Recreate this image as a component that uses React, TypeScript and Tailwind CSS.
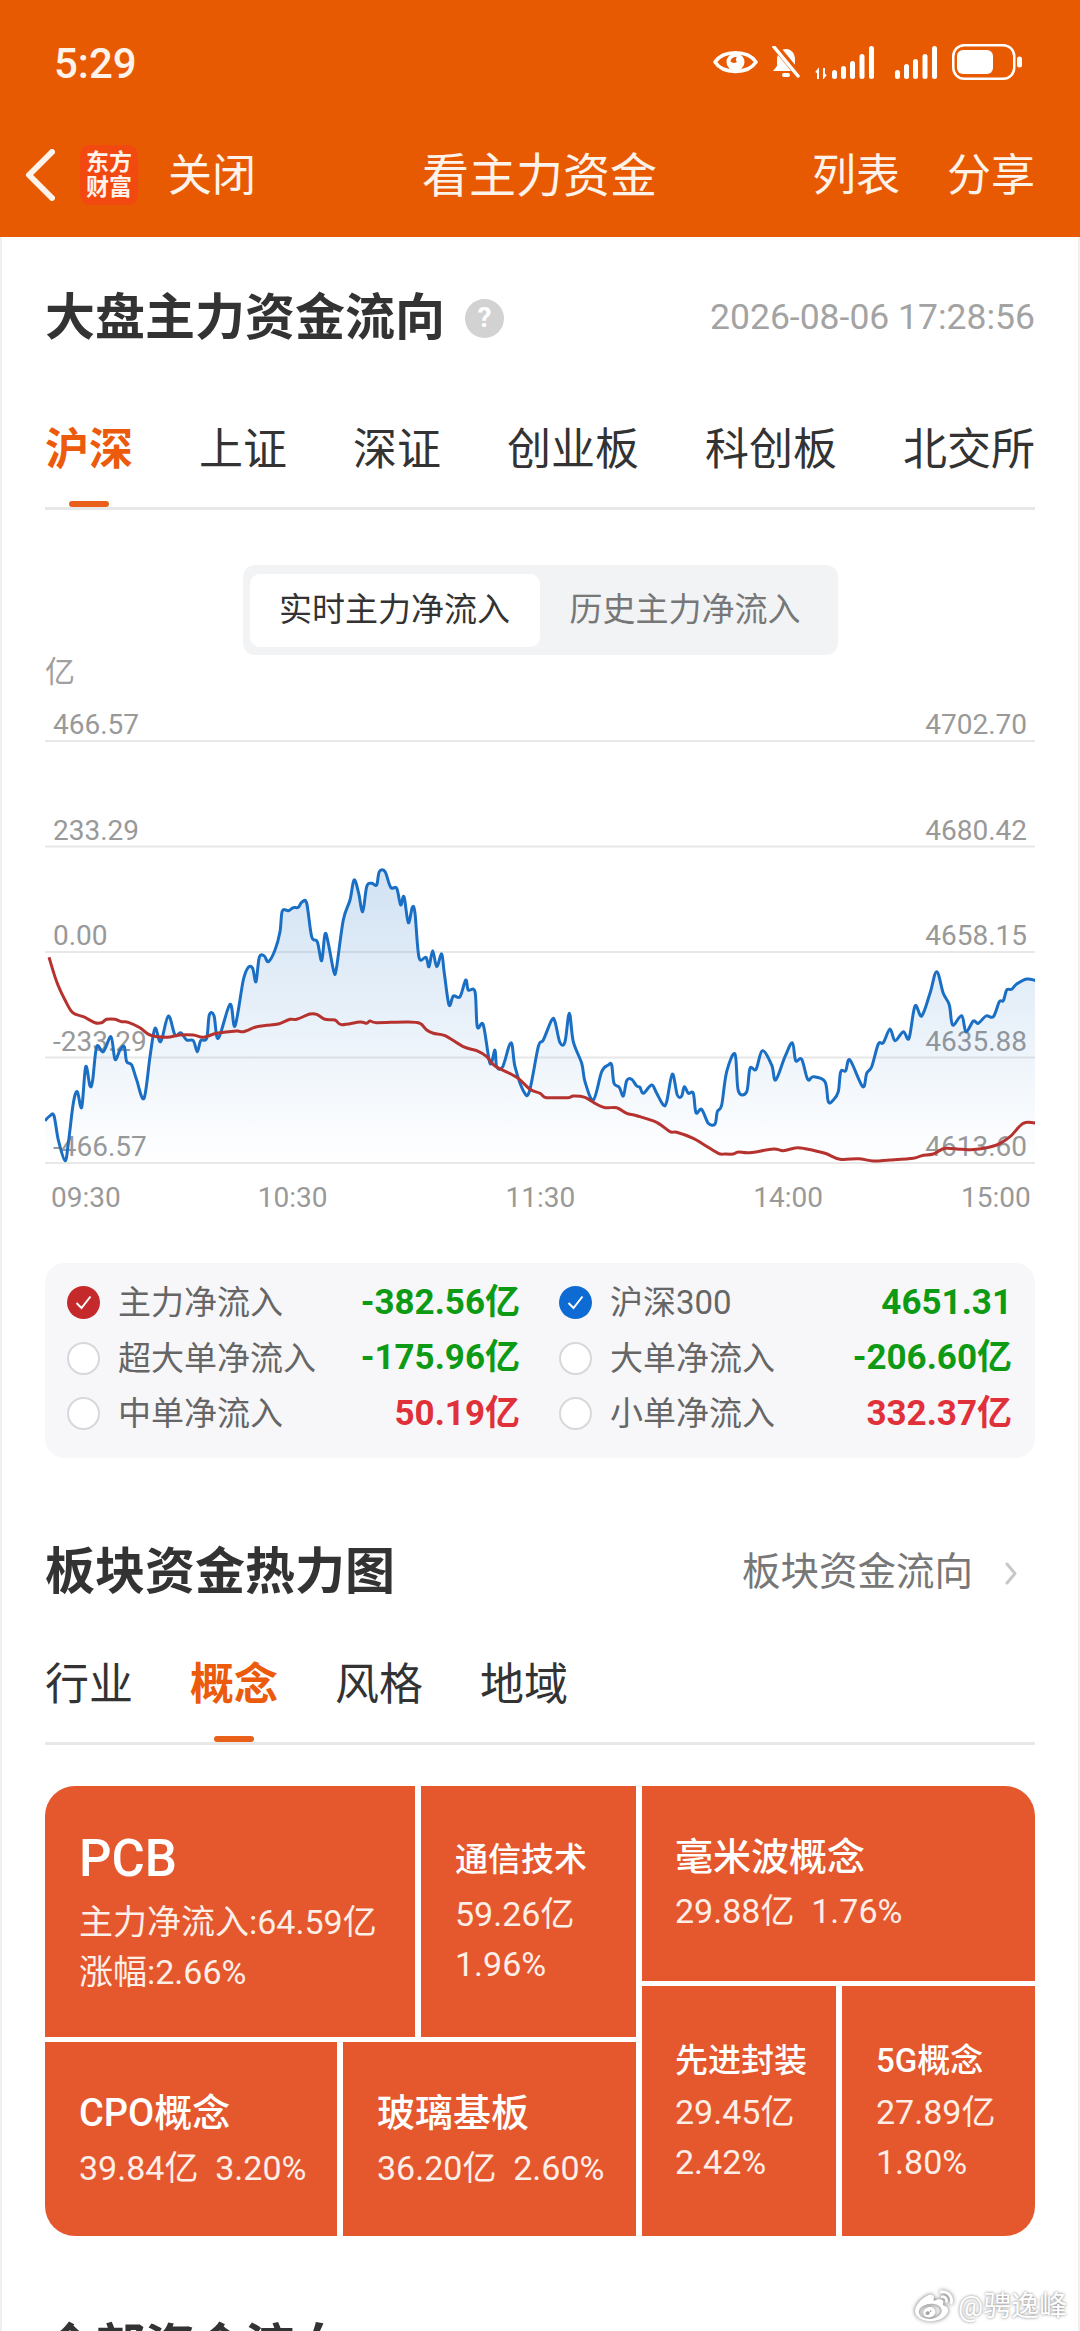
import { FaWeibo } from 'react-icons/fa';

type Point = [number, number];

// chart traces, read off two crops of the chart
const toLeft = (p: number[]): Point => [30 + p[0] / 3, 850 + p[1] / 3];
const toRight = (p: number[]): Point => [530 + p[0] / 3, 850 + p[1] / 3];

const blueLeft = [
  [45, 812], [60, 797], [72, 797], [85, 870], [105, 932], [115, 880], [130, 760], [142, 725], [155, 772], [167, 650],
  [180, 708], [188, 690], [200, 590], [220, 605], [243, 560], [255, 628], [270, 600], [283, 590], [290, 635], [305, 645],
  [320, 690], [342, 745], [360, 620], [375, 535], [392, 575], [415, 498], [435, 555], [452, 548], [470, 570], [490, 572],
  [502, 605], [512, 572], [530, 565], [538, 495], [552, 497], [565, 565], [600, 463], [615, 528], [640, 390], [655, 352],
  [668, 355], [678, 395], [688, 322], [703, 318], [715, 335], [735, 300], [750, 245], [757, 183], [775, 182], [790, 173],
  [805, 172], [815, 157], [830, 160], [845, 260], [862, 275], [875, 332], [885, 252], [895, 280], [912, 367], [920, 350],
  [940, 210], [960, 150], [972, 90], [985, 125], [998, 185], [1010, 110], [1025, 100], [1040, 105], [1048, 65], [1065, 65],
  [1082, 112], [1100, 115], [1112, 165], [1122, 140], [1135, 218], [1147, 172], [1155, 190], [1167, 322], [1188, 322], [1197, 350],
  [1208, 302], [1220, 350], [1235, 312], [1243, 370], [1257, 465], [1270, 438], [1290, 440], [1307, 390], [1315, 420], [1335, 425],
  [1342, 530], [1360, 525], [1380, 640], [1395, 600], [1400, 650], [1418, 650], [1443, 578], [1455, 650], [1480, 722], [1498, 725],
];

const blueRight = [
  [25, 590], [40, 570], [65, 510], [75, 515], [90, 578], [105, 575], [118, 490], [130, 575], [155, 640], [165, 695],
  [190, 750], [215, 665], [235, 645], [245, 645], [252, 700], [268, 712], [280, 738], [290, 692], [305, 688], [320, 708],
  [330, 712], [340, 730], [365, 705], [380, 730], [400, 765], [410, 755], [427, 672], [442, 735], [455, 738], [463, 710],
  [475, 730], [490, 730], [498, 788], [515, 778], [535, 820], [555, 822], [562, 785], [575, 765], [590, 665], [615, 612],
  [625, 722], [650, 725], [660, 655], [678, 658], [697, 602], [725, 645], [737, 690], [765, 620], [787, 578], [797, 632],
  [815, 628], [833, 688], [850, 680], [885, 695], [895, 755], [910, 750], [925, 725], [932, 665], [947, 662], [960, 630],
  [998, 710], [1010, 670], [1025, 650], [1045, 582], [1060, 578], [1080, 537], [1095, 572], [1120, 545], [1137, 565], [1155, 468],
  [1175, 498], [1200, 430], [1220, 365], [1240, 430], [1258, 465], [1268, 525], [1295, 497], [1308, 545], [1330, 513], [1345, 520],
  [1368, 498], [1390, 500], [1408, 455], [1420, 452], [1430, 420], [1445, 418], [1460, 402], [1490, 387], [1518, 392],
];

const redLeft = [
  [57, 322], [80, 395], [105, 450], [128, 488], [160, 500], [195, 518], [215, 518], [230, 508], [255, 508], [275, 515],
  [295, 517], [330, 533], [360, 555], [410, 562], [450, 555], [490, 555], [520, 562], [560, 550], [620, 543], [640, 545],
  [680, 530], [710, 526], [745, 522], [780, 508], [800, 508], [840, 492], [860, 493], [885, 508], [915, 510], [935, 524],
  [990, 516], [1010, 520], [1020, 513], [1040, 518], [1130, 516], [1170, 520], [1190, 540], [1210, 550], [1245, 557], [1300, 590],
  [1340, 602], [1370, 620], [1395, 648], [1460, 682],
];

const redRight = [
  [0, 718], [30, 730], [45, 742], [70, 743], [115, 743], [130, 738], [165, 742], [195, 760], [225, 773], [260, 773],
  [290, 790], [320, 797], [380, 817], [420, 845], [440, 847], [490, 865], [520, 883], [565, 910], [585, 912], [610, 912],
  [625, 906], [660, 908], [730, 897], [760, 902], [800, 893], [830, 897], [885, 910], [930, 928], [985, 926], [1030, 933],
  [1080, 930], [1150, 925], [1175, 917], [1210, 912], [1245, 895], [1295, 898], [1340, 898], [1400, 885], [1440, 860], [1480, 820],
  [1518, 819],
];

const bluePoints = [...blueLeft.map(toLeft), ...blueRight.map(toRight)];
const redPoints = [...redLeft.map(toLeft), ...redRight.map(toRight)];

// catmull-rom through the points, gives the rounded peaks of the line
function smoothPath(pts: Point[]) {
  let d = `M${pts[0][0].toFixed(1)} ${pts[0][1].toFixed(1)}`;
  for (let i = 0; i < pts.length - 1; i++) {
    const p0 = pts[Math.max(i - 1, 0)];
    const p1 = pts[i];
    const p2 = pts[i + 1];
    const p3 = pts[Math.min(i + 2, pts.length - 1)];
    const c1x = p1[0] + (p2[0] - p0[0]) / 6;
    const c1y = p1[1] + (p2[1] - p0[1]) / 6;
    const c2x = p2[0] - (p3[0] - p1[0]) / 6;
    const c2y = p2[1] - (p3[1] - p1[1]) / 6;
    d += `C${c1x.toFixed(1)} ${c1y.toFixed(1)} ${c2x.toFixed(1)} ${c2y.toFixed(1)} ${p2[0].toFixed(1)} ${p2[1].toFixed(1)}`;
  }
  return d;
}

const bluePath = smoothPath(bluePoints);
const redPath = smoothPath(redPoints);
const areaPath = `${bluePath}L${bluePoints[bluePoints.length - 1][0].toFixed(1)} 1163L45 1163Z`;

const gridLines = [741, 846.5, 952, 1057.5, 1163];

const axisRows = [
  ['466.57', '4702.70'],
  ['233.29', '4680.42'],
  ['0.00', '4658.15'],
  ['-233.29', '4635.88'],
  ['-466.57', '4613.60'],
];

const legendRows = [
  { label: '主力净流入', value: '-382.56亿', up: false, mark: 'red' },
  { label: '沪深300', value: '4651.31', up: false, mark: 'blue' },
  { label: '超大单净流入', value: '-175.96亿', up: false },
  { label: '大单净流入', value: '-206.60亿', up: false },
  { label: '中单净流入', value: '50.19亿', up: true },
  { label: '小单净流入', value: '332.37亿', up: true },
];

function EyeIcon() {
  return (
    <svg width="45" height="28" viewBox="0 0 45 28" fill="none">
      <path d="M2 14C10 1.5 35 1.5 43 14C35 26.5 10 26.5 2 14Z" stroke="#fff" strokeWidth="3.5" strokeLinejoin="round" />
      <circle cx="22.5" cy="14" r="9" fill="#fff" />
      <path d="M17.5 13.5C18 10 20.5 8.5 24 9C22.5 10 22.5 13 24 14C21.5 15.5 19 15 17.5 13.5Z" fill="#E85A02" />
    </svg>
  );
}

function BellOffIcon() {
  return (
    <svg width="28" height="32" viewBox="0 0 28 32" fill="none">
      <path d="M14 3C20 3 23 8 23 14V20L27 25H1L5 20V14C5 8 8 3 14 3Z" fill="#fff" />
      <rect x="10" y="27" width="8" height="4" rx="2" fill="#fff" />
      <path d="M3 0L27 29" stroke="#E85A02" strokeWidth="7" />
      <path d="M2 1L26 30" stroke="#fff" strokeWidth="3.5" strokeLinecap="round" />
    </svg>
  );
}

function SignalOne() {
  return (
    <svg width="60" height="33" viewBox="0 0 60 33" fill="#fff">
      <path d="M3 33V24L1 26.5M9 22V31L11 28.5" stroke="#fff" strokeWidth="2" fill="none" />
      <rect x="17" y="24" width="5" height="9" rx="2.5" />
      <rect x="26" y="20" width="5" height="13" rx="2.5" />
      <rect x="35" y="15" width="5" height="18" rx="2.5" />
      <rect x="44.5" y="8" width="5" height="25" rx="2.5" />
      <rect x="54" y="0" width="5" height="33" rx="2.5" />
    </svg>
  );
}

function SignalTwo() {
  return (
    <svg width="42" height="33" viewBox="0 0 42 33" fill="#fff">
      <rect x="0" y="24" width="5" height="9" rx="2.5" />
      <rect x="9" y="18" width="5" height="15" rx="2.5" />
      <rect x="18" y="13" width="5" height="20" rx="2.5" />
      <rect x="27.5" y="8" width="5" height="25" rx="2.5" />
      <rect x="37" y="0" width="5" height="33" rx="2.5" />
    </svg>
  );
}

function BatteryIcon() {
  return (
    <svg width="70" height="36" viewBox="0 0 70 36" fill="none">
      <rect x="1.25" y="1.25" width="61" height="33.5" rx="11" stroke="#fff" strokeWidth="2.5" />
      <rect x="5" y="6" width="36" height="24" rx="6" fill="#fff" />
      <rect x="65" y="12.5" width="5" height="11" rx="2.5" fill="#fff" />
    </svg>
  );
}

function Tabs({ items, active, spread }: { items: string[]; active: string; spread?: boolean }) {
  return (
    <div className={`flex border-b-[3px] border-[#e8e8e8] ${spread ? 'justify-between' : 'gap-[57px]'}`}>
      {items.map((item) => (
        <div key={item} className="flex flex-col items-center">
          <div
            className={`h-[102px] text-[44px] leading-[103px] ${item === active ? 'font-bold text-[#ec5a0c]' : 'text-[#333]'}`}
          >
            {item}
          </div>
          <div className={`h-[6px] w-[40px] rounded-[3px] ${item === active ? 'bg-[#e9601a]' : ''}`} />
        </div>
      ))}
    </div>
  );
}

function CheckMark({ color }: { color?: string }) {
  if (!color) {
    return <div className="h-[33px] w-[33px] shrink-0 rounded-full border-2 border-[#d8d8dc] bg-white" />;
  }
  return (
    <div
      className={`flex h-[33px] w-[33px] shrink-0 items-center justify-center rounded-full ${color === 'red' ? 'bg-[#c4292b]' : 'bg-[#0f6bd4]'}`}
    >
      <svg width="17" height="15" viewBox="0 0 17 15" fill="none">
        <path d="M1.5 8L6.5 13L15.5 1.5" stroke="#fff" strokeWidth="2" />
      </svg>
    </div>
  );
}

function Cell({ className, title, titleClass, lines }: { className: string; title: string; titleClass: string; lines: string[] }) {
  return <div className={`flex flex-col bg-[#e5582d] text-white ${className}`}>
    <div className={titleClass}>{title}</div>
    {lines.map((line) => (
      <div key={line} className="h-[50px] whitespace-pre text-[34px] leading-[50px] text-[#fdeee8]">
        {line}
      </div>
    ))}
  </div>;
}

export default function App() {
  return (
    <div className="relative h-[2331px] w-[1080px] overflow-hidden bg-white [font-family:Roboto,'Noto_Sans_CJK_SC',sans-serif]">
      <header className="h-[237px] bg-[#e85a02] text-[#fdf3ea]">
        <div className="flex h-[124px] items-center pl-[54px] pr-[58px]">
          <span className="mt-[3px] text-[42px] font-medium">5:29</span>
          <div className="ml-auto flex items-center">
            <EyeIcon />
            <div className="ml-[14px]"><BellOffIcon /></div>
            <div className="ml-[15px]"><SignalOne /></div>
            <div className="ml-[20px]"><SignalTwo /></div>
            <div className="ml-[15px]"><BatteryIcon /></div>
          </div>
        </div>
        <div className="relative flex h-[102px] items-center pl-[25px] pr-[45px]">
          <svg width="30" height="52" viewBox="0 0 30 52" fill="none">
            <path d="M27 3L4 26L27 49" stroke="#fdf3ea" strokeWidth="6" strokeLinecap="round" strokeLinejoin="round" />
          </svg>
          <div className="ml-[25px] flex h-[60px] w-[58px] flex-col items-center justify-center rounded-[10px] bg-[#f1490f] text-[23px] font-bold leading-[25px] text-[#fff2ea]">
            <span>东方</span>
            <span>财富</span>
          </div>
          <span className="ml-[30px] mt-[2px] text-[44px]">关闭</span>
          <span className="absolute left-[422px] mt-[2px] text-[47px]">看主力资金</span>
          <div className="ml-auto mt-[2px] flex gap-[47px] text-[44px]">
            <span>列表</span>
            <span>分享</span>
          </div>
        </div>
      </header>

      <main className="border-x-2 border-[#f0f0f0] px-[43px] pt-[56px]">
        <div className="flex h-[50px] items-center">
          <h1 className="text-[50px] font-bold leading-[50px] text-[#333]">大盘主力资金流向</h1>
          <div className="ml-[20px] flex h-[39px] w-[39px] items-center justify-center rounded-full bg-[#d2d2d2] text-[28px] font-bold text-white">?</div>
          <span className="ml-auto text-[35.5px] text-[#a3a3a3]">2026-08-06 17:28:56</span>
        </div>

        <div className="mt-[56px]">
          <Tabs items={['沪深', '上证', '深证', '创业板', '科创板', '北交所']} active="沪深" spread />
        </div>

        <div className="mt-[55px] flex justify-center">
          <div className="flex h-[90px] w-[595px] items-center rounded-[12px] bg-[#f2f3f5] px-[7px]">
            <div className="flex h-[73px] w-[290px] items-center justify-center rounded-[10px] bg-white text-[33px] text-[#333]">实时主力净流入</div>
            <div className="flex h-[73px] w-[291px] items-center justify-center text-[33px] text-[#777]">历史主力净流入</div>
          </div>
        </div>

        <div className="h-[34px] text-[30px] leading-[34px] text-[#a0a0a0]">亿</div>

        <div className="relative h-[481px]">
          <div className="absolute left-[8px] right-[8px] top-[-53.5px] flex flex-col text-[28px] text-[#999]">
            {axisRows.map(([left, right]) => (
              <div key={left} className="flex h-[105.5px] items-end justify-between leading-[32px]">
                <span>{left}</span>
                <span>{right}</span>
              </div>
            ))}
          </div>
          <svg className="relative" width="990" height="481" viewBox="45 689 990 481" fill="none">
            <defs>
              <linearGradient id="flowFill" x1="0" y1="0" x2="0" y2="1">
                <stop offset="0" stopColor="#1a6fc4" stopOpacity="0.2" />
                <stop offset="1" stopColor="#1a6fc4" stopOpacity="0" />
              </linearGradient>
            </defs>
            {gridLines.map((y) => (
              <line key={y} x1="45" x2="1035" y1={y} y2={y} stroke="#e8e8e8" strokeWidth="2" />
            ))}
            <path d={areaPath} fill="url(#flowFill)" />
            <path d={bluePath} stroke="#1a6fc4" strokeWidth="3" strokeLinejoin="round" />
            <path d={redPath} stroke="#b5322f" strokeWidth="3" strokeLinejoin="round" />
          </svg>
        </div>

        <div className="flex h-[55px] items-center pl-[6px] text-[28px] leading-none text-[#999]">
          <span>09:30</span>
          <span className="ml-[137px]">10:30</span>
          <span className="ml-[178px]">11:30</span>
          <span className="ml-[178px]">14:00</span>
          <span className="ml-[138px]">15:00</span>
        </div>

        <div className="mt-[38px] grid h-[195px] grid-cols-2 content-start gap-x-[39px] rounded-[20px] bg-[#f7f7f9] pl-[22px] pr-[23px] pt-[12px]">
          {legendRows.map((row) => (
            <div key={row.label} className="flex h-[55.5px] items-center">
              <CheckMark color={row.mark} />
              <span className="ml-[18px] text-[33px] text-[#666]">{row.label}</span>
              <span className={`ml-auto text-[35px] font-bold ${row.up ? 'text-[#e0313a]' : 'text-[#0d9a14]'}`}>{row.value}</span>
            </div>
          ))}
        </div>

        <div className="mt-[89px] flex h-[50px] items-center">
          <h2 className="text-[50px] font-bold leading-[50px] text-[#333]">板块资金热力图</h2>
          <span className="ml-auto text-[38.5px] text-[#777]">板块资金流向</span>
          <svg className="ml-[32px] mr-[18px] mt-[3px]" width="12" height="23" viewBox="0 0 12 23" fill="none">
            <path d="M2 2L10 11.5L2 21" stroke="#c8c8c8" strokeWidth="3" strokeLinecap="round" strokeLinejoin="round" />
          </svg>
        </div>

        <div className="mt-[37px]">
          <Tabs items={['行业', '概念', '风格', '地域']} active="概念" />
        </div>

        <div className="mt-[41px] flex h-[450px] gap-[6px] overflow-hidden rounded-[30px]">
          <div className="flex w-[591px] flex-col gap-[5px]">
            <div className="flex h-[251px] gap-[6px]">
              <Cell
                className="w-[370px] pl-[34px] pt-[48px]"
                title="PCB"
                titleClass="mb-[13px] h-[50px] text-[51px] font-medium leading-[50px]"
                lines={['主力净流入:64.59亿', '涨幅:2.66%']}
              />
              <Cell
                className="flex-1 pl-[34px] pt-[54px]"
                title="通信技术"
                titleClass="mb-[9px] text-[33px] font-medium leading-[40px]"
                lines={['59.26亿', '1.96%']}
              />
            </div>
            <div className="flex flex-1 gap-[6px]">
              <Cell
                className="w-[292px] pl-[34px] pt-[50px]"
                title="CPO概念"
                titleClass="mb-[9px] text-[38px] font-medium leading-[42px]"
                lines={['39.84亿  3.20%']}
              />
              <Cell
                className="flex-1 pl-[34px] pt-[50px]"
                title="玻璃基板"
                titleClass="mb-[9px] text-[38px] font-medium leading-[42px]"
                lines={['36.20亿  2.60%']}
              />
            </div>
          </div>
          <div className="flex flex-1 flex-col gap-[5px]">
            <Cell
              className="h-[195px] pl-[33px] pt-[50px]"
              title="毫米波概念"
              titleClass="mb-[8px] text-[38px] font-medium leading-[42px]"
              lines={['29.88亿  1.76%']}
            />
            <div className="flex flex-1 gap-[6px]">
              <Cell
                className="w-[194px] pl-[33px] pt-[55px]"
                title="先进封装"
                titleClass="mb-[6px] text-[33px] font-medium leading-[40px]"
                lines={['29.45亿', '2.42%']}
              />
              <Cell
                className="flex-1 pl-[34px] pt-[55px]"
                title="5G概念"
                titleClass="mb-[6px] text-[33px] font-medium leading-[40px]"
                lines={['27.89亿', '1.80%']}
              />
            </div>
          </div>
        </div>

        <h2 className="mt-[87px] text-[50px] font-bold leading-[50px] text-[#333]">全部资金流向</h2>
      </main>

      <div className="absolute left-[915px] top-[2286px] flex items-center gap-[5px] text-[28px] text-white [text-shadow:0_0_3px_rgba(0,0,0,0.55)]">
        <FaWeibo size={38} color="#fff" style={{ filter: 'drop-shadow(0 0 2px rgba(0,0,0,0.6))' }} />
        <span>@骋逸峰</span>
      </div>
    </div>
  );
}
